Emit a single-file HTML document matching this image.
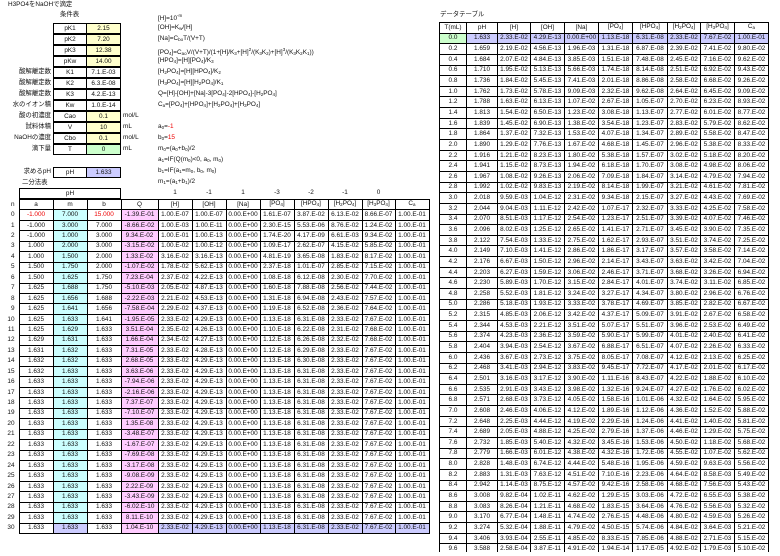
<!DOCTYPE html>
<html><head><meta charset="utf-8"><style>
*{margin:0;padding:0;box-sizing:border-box}
body{width:780px;height:556px;overflow:hidden;background:#fff;font-family:"Liberation Sans","Noto Sans CJK JP",sans-serif;font-size:6.4px;color:#111;position:relative}
.a{position:absolute;white-space:nowrap;line-height:10px}
.bx{position:absolute;border:1px solid #000;text-align:center;line-height:9px;height:11px}
sub{font-size:4.5px;vertical-align:-1px}
sup{font-size:4.5px;vertical-align:3px}
table{border-collapse:collapse;table-layout:fixed;position:absolute}
td{border:1px solid #000;text-align:center;height:10.45px;line-height:8px;padding:0;white-space:nowrap;overflow:hidden}
#L td.n{border:none;text-align:right;padding-right:4px}
#L tr td:nth-child(3){background:#ccffff}
#L tr td:nth-child(5){background:#ffccff}
#L tr.h td{background:#fff}
#L tr.z td:nth-child(2),#L tr.z td:nth-child(4){color:#e00}
#L tr.e td:nth-child(3),#L tr.e td:nth-child(n+6){background:#ccccff}
#R td{height:10.65px}
#R tr.f td{background:#ccccff}
#R tr.f td:first-child{background:#ccffcc}
.r{color:#e00}
</style></head><body>
<div class="a" style="left:8px;top:0">H3PO4をNaOHで滴定</div>
<div class="a" style="left:60px;top:10px">条件表</div>
<div class="a" style="left:440px;top:10px">データテーブル</div>

<div class="bx" style="left:53px;top:23px;width:34px">pK1</div><div class="bx" style="left:86px;top:23px;width:35px;background:#ffffcc">2.15</div>
<div class="bx" style="left:53px;top:34px;width:34px">pK2</div><div class="bx" style="left:86px;top:34px;width:35px;background:#ffffcc">7.20</div>
<div class="bx" style="left:53px;top:45px;width:34px">pK3</div><div class="bx" style="left:86px;top:45px;width:35px;background:#ffffcc">12.38</div>
<div class="bx" style="left:53px;top:56px;width:34px">pKw</div><div class="bx" style="left:86px;top:56px;width:35px;background:#ffffcc">14.00</div>
<div class="a" style="left:0;width:51px;text-align:right;top:67px">酸解離定数</div><div class="bx" style="left:53px;top:67px;width:34px">K1</div><div class="bx" style="left:86px;top:67px;width:35px">7.1.E-03</div>
<div class="a" style="left:0;width:51px;text-align:right;top:78px">酸解離定数</div><div class="bx" style="left:53px;top:78px;width:34px">K2</div><div class="bx" style="left:86px;top:78px;width:35px">6.3.E-08</div>
<div class="a" style="left:0;width:51px;text-align:right;top:89px">酸解離定数</div><div class="bx" style="left:53px;top:89px;width:34px">K3</div><div class="bx" style="left:86px;top:89px;width:35px">4.2.E-13</div>
<div class="a" style="left:0;width:51px;text-align:right;top:100px">水のイオン積</div><div class="bx" style="left:53px;top:100px;width:34px">Kw</div><div class="bx" style="left:86px;top:100px;width:35px">1.0.E-14</div>
<div class="a" style="left:0;width:51px;text-align:right;top:111px">酸の初濃度</div><div class="bx" style="left:53px;top:111px;width:34px">Cao</div><div class="bx" style="left:86px;top:111px;width:35px;background:#ffffcc">0.1</div><div class="a" style="left:123px;top:111px">mol/L</div>
<div class="a" style="left:0;width:51px;text-align:right;top:122px">試料体積</div><div class="bx" style="left:53px;top:122px;width:34px">V</div><div class="bx" style="left:86px;top:122px;width:35px;background:#ffffcc">10</div><div class="a" style="left:123px;top:122px">mL</div>
<div class="a" style="left:0;width:51px;text-align:right;top:133px">NaOHの濃度</div><div class="bx" style="left:53px;top:133px;width:34px">Cbo</div><div class="bx" style="left:86px;top:133px;width:35px;background:#ffffcc">0.1</div><div class="a" style="left:123px;top:133px">mol/L</div>
<div class="a" style="left:0;width:51px;text-align:right;top:144px">滴下量</div><div class="bx" style="left:53px;top:144px;width:34px">T</div><div class="bx" style="left:86px;top:144px;width:35px;background:#ccffcc">0</div><div class="a" style="left:123px;top:144px">mL</div>
<div class="a" style="left:0;width:51px;text-align:right;top:167px">求めるpH</div><div class="bx" style="left:53px;top:167px;width:34px">pH</div><div class="bx" style="left:86px;top:167px;width:35px;background:#ccccff">1.633</div>
<div class="a" style="left:22px;top:178px">二分法表</div>

<div class="a" style="left:158px;top:11px">[H]=10<sup>-m</sup></div>
<div class="a" style="left:158px;top:23px">[OH]=K<sub>w</sub>/[H]</div>
<div class="a" style="left:158px;top:34px">[Na]=C<sub>bo</sub>T/(V+T)</div>
<div class="a" style="left:158px;top:45px">[PO<sub>4</sub>]=C<sub>ao</sub>V/(V+T)/(1+[H]/K<sub>3</sub>+[H]<sup>2</sup>/(K<sub>3</sub>K<sub>2</sub>)+[H]<sup>3</sup>/(K<sub>3</sub>K<sub>2</sub>K<sub>1</sub>))</div>
<div class="a" style="left:158px;top:56px">[HPO<sub>4</sub>]=[H][PO<sub>4</sub>]/K<sub>3</sub></div>
<div class="a" style="left:158px;top:67px">[H<sub>2</sub>PO<sub>4</sub>]=[H][HPO<sub>4</sub>]/K<sub>2</sub></div>
<div class="a" style="left:158px;top:78px">[H<sub>3</sub>PO<sub>4</sub>]=[H][H<sub>2</sub>PO<sub>4</sub>]/K<sub>1</sub></div>
<div class="a" style="left:158px;top:89px">Q=[H]-[OH]+[Na]-3[PO<sub>4</sub>]-2[HPO<sub>4</sub>]-[H<sub>2</sub>PO<sub>4</sub>]</div>
<div class="a" style="left:158px;top:100px">C<sub>a</sub>=[PO<sub>4</sub>]+[HPO<sub>4</sub>]+[H<sub>2</sub>PO<sub>4</sub>]+[H<sub>3</sub>PO<sub>4</sub>]</div>
<div class="a" style="left:158px;top:122px">a<sub>0</sub>=<span class="r">-1</span></div>
<div class="a" style="left:158px;top:133px">b<sub>0</sub>=<span class="r">15</span></div>
<div class="a" style="left:158px;top:144px">m<sub>0</sub>=(a<sub>0</sub>+b<sub>0</sub>)/2</div>
<div class="a" style="left:158px;top:155px">a<sub>1</sub>=IF(Q(m<sub>0</sub>)&lt;0, a<sub>0</sub>, m<sub>0</sub>)</div>
<div class="a" style="left:158px;top:166px">b<sub>1</sub>=IF(a<sub>1</sub>=m<sub>0</sub>, b<sub>0</sub>, m<sub>0</sub>)</div>
<div class="a" style="left:158px;top:177px">m<sub>1</sub>=(a<sub>1</sub>+b<sub>1</sub>)/2</div>

<div class="bx" style="left:19px;top:188px;width:102px">pH</div>
<div class="a" style="left:158px;top:188px;width:34px;text-align:center">1</div>
<div class="a" style="left:192px;top:188px;width:34px;text-align:center">-1</div>
<div class="a" style="left:226px;top:188px;width:34px;text-align:center">1</div>
<div class="a" style="left:260px;top:188px;width:34px;text-align:center">-3</div>
<div class="a" style="left:294px;top:188px;width:34px;text-align:center">-2</div>
<div class="a" style="left:328px;top:188px;width:34px;text-align:center">-1</div>
<div class="a" style="left:362px;top:188px;width:33px;text-align:center">0</div>

<table id="L" style="left:0;top:199px;width:429px">
<colgroup><col style="width:19px"><col style="width:34px"><col style="width:34px"><col style="width:34px"><col style="width:37px"><col style="width:34px"><col style="width:34px"><col style="width:34px"><col style="width:34px"><col style="width:34px"><col style="width:34px"><col style="width:33px"><col style="width:34px"></colgroup>
<tr class="h"><td class="n">n</td><td>a</td><td>m</td><td>b</td><td>Q</td><td>[H]</td><td>[OH]</td><td>[Na]</td><td>[PO<sub>4</sub>]</td><td>[HPO<sub>4</sub>]</td><td>[H<sub>2</sub>PO<sub>4</sub>]</td><td>[H<sub>3</sub>PO<sub>4</sub>]</td><td>C<sub>a</sub></td></tr>
<tr class="z"><td class="n">0</td><td>-1.000</td><td>7.000</td><td>15.000</td><td>-1.39.E-01</td><td>1.00.E-07</td><td>1.00.E-07</td><td>0.00.E+00</td><td>1.61.E-07</td><td>3.87.E-02</td><td>6.13.E-02</td><td>8.66.E-07</td><td>1.00.E-01</td></tr>
<tr><td class="n">1</td><td>-1.000</td><td>3.000</td><td>7.000</td><td>-8.66.E-02</td><td>1.00.E-03</td><td>1.00.E-11</td><td>0.00.E+00</td><td>2.30.E-15</td><td>5.53.E-06</td><td>8.76.E-02</td><td>1.24.E-02</td><td>1.00.E-01</td></tr>
<tr><td class="n">2</td><td>-1.000</td><td>1.000</td><td>3.000</td><td>9.34.E-02</td><td>1.00.E-01</td><td>1.00.E-13</td><td>0.00.E+00</td><td>1.74.E-20</td><td>4.17.E-09</td><td>6.61.E-03</td><td>9.34.E-02</td><td>1.00.E-01</td></tr>
<tr><td class="n">3</td><td>1.000</td><td>2.000</td><td>3.000</td><td>-3.15.E-02</td><td>1.00.E-02</td><td>1.00.E-12</td><td>0.00.E+00</td><td>1.09.E-17</td><td>2.62.E-07</td><td>4.15.E-02</td><td>5.85.E-02</td><td>1.00.E-01</td></tr>
<tr><td class="n">4</td><td>1.000</td><td>1.500</td><td>2.000</td><td>1.33.E-02</td><td>3.16.E-02</td><td>3.16.E-13</td><td>0.00.E+00</td><td>4.81.E-19</td><td>3.65.E-08</td><td>1.83.E-02</td><td>8.17.E-02</td><td>1.00.E-01</td></tr>
<tr><td class="n">5</td><td>1.500</td><td>1.750</td><td>2.000</td><td>-1.07.E-02</td><td>1.78.E-02</td><td>5.62.E-13</td><td>0.00.E+00</td><td>2.37.E-18</td><td>1.01.E-07</td><td>2.85.E-02</td><td>7.15.E-02</td><td>1.00.E-01</td></tr>
<tr><td class="n">6</td><td>1.500</td><td>1.625</td><td>1.750</td><td>7.23.E-04</td><td>2.37.E-02</td><td>4.22.E-13</td><td>0.00.E+00</td><td>1.08.E-18</td><td>6.12.E-08</td><td>2.30.E-02</td><td>7.70.E-02</td><td>1.00.E-01</td></tr>
<tr><td class="n">7</td><td>1.625</td><td>1.688</td><td>1.750</td><td>-5.10.E-03</td><td>2.05.E-02</td><td>4.87.E-13</td><td>0.00.E+00</td><td>1.60.E-18</td><td>7.88.E-08</td><td>2.56.E-02</td><td>7.44.E-02</td><td>1.00.E-01</td></tr>
<tr><td class="n">8</td><td>1.625</td><td>1.656</td><td>1.688</td><td>-2.22.E-03</td><td>2.21.E-02</td><td>4.53.E-13</td><td>0.00.E+00</td><td>1.31.E-18</td><td>6.94.E-08</td><td>2.43.E-02</td><td>7.57.E-02</td><td>1.00.E-01</td></tr>
<tr><td class="n">9</td><td>1.625</td><td>1.641</td><td>1.656</td><td>-7.58.E-04</td><td>2.29.E-02</td><td>4.37.E-13</td><td>0.00.E+00</td><td>1.19.E-18</td><td>6.52.E-08</td><td>2.36.E-02</td><td>7.64.E-02</td><td>1.00.E-01</td></tr>
<tr><td class="n">10</td><td>1.625</td><td>1.633</td><td>1.641</td><td>-1.95.E-05</td><td>2.33.E-02</td><td>4.29.E-13</td><td>0.00.E+00</td><td>1.13.E-18</td><td>6.31.E-08</td><td>2.33.E-02</td><td>7.67.E-02</td><td>1.00.E-01</td></tr>
<tr><td class="n">11</td><td>1.625</td><td>1.629</td><td>1.633</td><td>3.51.E-04</td><td>2.35.E-02</td><td>4.26.E-13</td><td>0.00.E+00</td><td>1.10.E-18</td><td>6.22.E-08</td><td>2.31.E-02</td><td>7.68.E-02</td><td>1.00.E-01</td></tr>
<tr><td class="n">12</td><td>1.629</td><td>1.631</td><td>1.633</td><td>1.66.E-04</td><td>2.34.E-02</td><td>4.27.E-13</td><td>0.00.E+00</td><td>1.12.E-18</td><td>6.26.E-08</td><td>2.32.E-02</td><td>7.68.E-02</td><td>1.00.E-01</td></tr>
<tr><td class="n">13</td><td>1.631</td><td>1.632</td><td>1.633</td><td>7.31.E-05</td><td>2.33.E-02</td><td>4.28.E-13</td><td>0.00.E+00</td><td>1.12.E-18</td><td>6.29.E-08</td><td>2.33.E-02</td><td>7.67.E-02</td><td>1.00.E-01</td></tr>
<tr><td class="n">14</td><td>1.632</td><td>1.632</td><td>1.633</td><td>2.68.E-05</td><td>2.33.E-02</td><td>4.29.E-13</td><td>0.00.E+00</td><td>1.13.E-18</td><td>6.30.E-08</td><td>2.33.E-02</td><td>7.67.E-02</td><td>1.00.E-01</td></tr>
<tr><td class="n">15</td><td>1.632</td><td>1.633</td><td>1.633</td><td>3.63.E-06</td><td>2.33.E-02</td><td>4.29.E-13</td><td>0.00.E+00</td><td>1.13.E-18</td><td>6.31.E-08</td><td>2.33.E-02</td><td>7.67.E-02</td><td>1.00.E-01</td></tr>
<tr><td class="n">16</td><td>1.633</td><td>1.633</td><td>1.633</td><td>-7.94.E-06</td><td>2.33.E-02</td><td>4.29.E-13</td><td>0.00.E+00</td><td>1.13.E-18</td><td>6.31.E-08</td><td>2.33.E-02</td><td>7.67.E-02</td><td>1.00.E-01</td></tr>
<tr><td class="n">17</td><td>1.633</td><td>1.633</td><td>1.633</td><td>-2.16.E-06</td><td>2.33.E-02</td><td>4.29.E-13</td><td>0.00.E+00</td><td>1.13.E-18</td><td>6.31.E-08</td><td>2.33.E-02</td><td>7.67.E-02</td><td>1.00.E-01</td></tr>
<tr><td class="n">18</td><td>1.633</td><td>1.633</td><td>1.633</td><td>7.37.E-07</td><td>2.33.E-02</td><td>4.29.E-13</td><td>0.00.E+00</td><td>1.13.E-18</td><td>6.31.E-08</td><td>2.33.E-02</td><td>7.67.E-02</td><td>1.00.E-01</td></tr>
<tr><td class="n">19</td><td>1.633</td><td>1.633</td><td>1.633</td><td>-7.10.E-07</td><td>2.33.E-02</td><td>4.29.E-13</td><td>0.00.E+00</td><td>1.13.E-18</td><td>6.31.E-08</td><td>2.33.E-02</td><td>7.67.E-02</td><td>1.00.E-01</td></tr>
<tr><td class="n">20</td><td>1.633</td><td>1.633</td><td>1.633</td><td>1.35.E-08</td><td>2.33.E-02</td><td>4.29.E-13</td><td>0.00.E+00</td><td>1.13.E-18</td><td>6.31.E-08</td><td>2.33.E-02</td><td>7.67.E-02</td><td>1.00.E-01</td></tr>
<tr><td class="n">21</td><td>1.633</td><td>1.633</td><td>1.633</td><td>-3.48.E-07</td><td>2.33.E-02</td><td>4.29.E-13</td><td>0.00.E+00</td><td>1.13.E-18</td><td>6.31.E-08</td><td>2.33.E-02</td><td>7.67.E-02</td><td>1.00.E-01</td></tr>
<tr><td class="n">22</td><td>1.633</td><td>1.633</td><td>1.633</td><td>-1.67.E-07</td><td>2.33.E-02</td><td>4.29.E-13</td><td>0.00.E+00</td><td>1.13.E-18</td><td>6.31.E-08</td><td>2.33.E-02</td><td>7.67.E-02</td><td>1.00.E-01</td></tr>
<tr><td class="n">23</td><td>1.633</td><td>1.633</td><td>1.633</td><td>-7.69.E-08</td><td>2.33.E-02</td><td>4.29.E-13</td><td>0.00.E+00</td><td>1.13.E-18</td><td>6.31.E-08</td><td>2.33.E-02</td><td>7.67.E-02</td><td>1.00.E-01</td></tr>
<tr><td class="n">24</td><td>1.633</td><td>1.633</td><td>1.633</td><td>-3.17.E-08</td><td>2.33.E-02</td><td>4.29.E-13</td><td>0.00.E+00</td><td>1.13.E-18</td><td>6.31.E-08</td><td>2.33.E-02</td><td>7.67.E-02</td><td>1.00.E-01</td></tr>
<tr><td class="n">25</td><td>1.633</td><td>1.633</td><td>1.633</td><td>-9.08.E-09</td><td>2.33.E-02</td><td>4.29.E-13</td><td>0.00.E+00</td><td>1.13.E-18</td><td>6.31.E-08</td><td>2.33.E-02</td><td>7.67.E-02</td><td>1.00.E-01</td></tr>
<tr><td class="n">26</td><td>1.633</td><td>1.633</td><td>1.633</td><td>2.22.E-09</td><td>2.33.E-02</td><td>4.29.E-13</td><td>0.00.E+00</td><td>1.13.E-18</td><td>6.31.E-08</td><td>2.33.E-02</td><td>7.67.E-02</td><td>1.00.E-01</td></tr>
<tr><td class="n">27</td><td>1.633</td><td>1.633</td><td>1.633</td><td>-3.43.E-09</td><td>2.33.E-02</td><td>4.29.E-13</td><td>0.00.E+00</td><td>1.13.E-18</td><td>6.31.E-08</td><td>2.33.E-02</td><td>7.67.E-02</td><td>1.00.E-01</td></tr>
<tr><td class="n">28</td><td>1.633</td><td>1.633</td><td>1.633</td><td>-6.02.E-10</td><td>2.33.E-02</td><td>4.29.E-13</td><td>0.00.E+00</td><td>1.13.E-18</td><td>6.31.E-08</td><td>2.33.E-02</td><td>7.67.E-02</td><td>1.00.E-01</td></tr>
<tr><td class="n">29</td><td>1.633</td><td>1.633</td><td>1.633</td><td>8.11.E-10</td><td>2.33.E-02</td><td>4.29.E-13</td><td>0.00.E+00</td><td>1.13.E-18</td><td>6.31.E-08</td><td>2.33.E-02</td><td>7.67.E-02</td><td>1.00.E-01</td></tr>
<tr class="e"><td class="n">30</td><td>1.633</td><td>1.633</td><td>1.633</td><td>1.04.E-10</td><td>2.33.E-02</td><td>4.29.E-13</td><td>0.00.E+00</td><td>1.13.E-18</td><td>6.31.E-08</td><td>2.33.E-02</td><td>7.67.E-02</td><td>1.00.E-01</td></tr>
</table>

<div style="position:absolute;left:0;top:0;width:780px;height:552px;overflow:hidden">
<table id="R" style="left:439px;top:22px;width:329px">
<colgroup><col style="width:27px"><col style="width:31px"><col style="width:33px"><col style="width:34px"><col style="width:34px"><col style="width:34px"><col style="width:35px"><col style="width:33px"><col style="width:34px"><col style="width:34px"></colgroup>
<tr><td>T(mL)</td><td>pH</td><td>[H]</td><td>[OH]</td><td>[Na]</td><td>[PO<sub>4</sub>]</td><td>[HPO<sub>4</sub>]</td><td>[H<sub>2</sub>PO<sub>4</sub>]</td><td>[H<sub>3</sub>PO<sub>4</sub>]</td><td>C<sub>a</sub></td></tr>
<tr class="f"><td>0.0</td><td>1.633</td><td>2.33.E-02</td><td>4.29.E-13</td><td>0.00.E+00</td><td>1.13.E-18</td><td>6.31.E-08</td><td>2.33.E-02</td><td>7.67.E-02</td><td>1.00.E-01</td></tr>
<tr><td>0.2</td><td>1.659</td><td>2.19.E-02</td><td>4.56.E-13</td><td>1.96.E-03</td><td>1.31.E-18</td><td>6.87.E-08</td><td>2.39.E-02</td><td>7.41.E-02</td><td>9.80.E-02</td></tr>
<tr><td>0.4</td><td>1.684</td><td>2.07.E-02</td><td>4.84.E-13</td><td>3.85.E-03</td><td>1.51.E-18</td><td>7.48.E-08</td><td>2.45.E-02</td><td>7.16.E-02</td><td>9.62.E-02</td></tr>
<tr><td>0.6</td><td>1.710</td><td>1.95.E-02</td><td>5.13.E-13</td><td>5.66.E-03</td><td>1.74.E-18</td><td>8.14.E-08</td><td>2.51.E-02</td><td>6.92.E-02</td><td>9.43.E-02</td></tr>
<tr><td>0.8</td><td>1.736</td><td>1.84.E-02</td><td>5.45.E-13</td><td>7.41.E-03</td><td>2.01.E-18</td><td>8.86.E-08</td><td>2.58.E-02</td><td>6.68.E-02</td><td>9.26.E-02</td></tr>
<tr><td>1.0</td><td>1.762</td><td>1.73.E-02</td><td>5.78.E-13</td><td>9.09.E-03</td><td>2.32.E-18</td><td>9.62.E-08</td><td>2.64.E-02</td><td>6.45.E-02</td><td>9.09.E-02</td></tr>
<tr><td>1.2</td><td>1.788</td><td>1.63.E-02</td><td>6.13.E-13</td><td>1.07.E-02</td><td>2.67.E-18</td><td>1.05.E-07</td><td>2.70.E-02</td><td>6.23.E-02</td><td>8.93.E-02</td></tr>
<tr><td>1.4</td><td>1.813</td><td>1.54.E-02</td><td>6.50.E-13</td><td>1.23.E-02</td><td>3.08.E-18</td><td>1.13.E-07</td><td>2.77.E-02</td><td>6.01.E-02</td><td>8.77.E-02</td></tr>
<tr><td>1.6</td><td>1.839</td><td>1.45.E-02</td><td>6.90.E-13</td><td>1.38.E-02</td><td>3.54.E-18</td><td>1.23.E-07</td><td>2.83.E-02</td><td>5.79.E-02</td><td>8.62.E-02</td></tr>
<tr><td>1.8</td><td>1.864</td><td>1.37.E-02</td><td>7.32.E-13</td><td>1.53.E-02</td><td>4.07.E-18</td><td>1.34.E-07</td><td>2.89.E-02</td><td>5.58.E-02</td><td>8.47.E-02</td></tr>
<tr><td>2.0</td><td>1.890</td><td>1.29.E-02</td><td>7.76.E-13</td><td>1.67.E-02</td><td>4.68.E-18</td><td>1.45.E-07</td><td>2.96.E-02</td><td>5.38.E-02</td><td>8.33.E-02</td></tr>
<tr><td>2.2</td><td>1.916</td><td>1.21.E-02</td><td>8.23.E-13</td><td>1.80.E-02</td><td>5.38.E-18</td><td>1.57.E-07</td><td>3.02.E-02</td><td>5.18.E-02</td><td>8.20.E-02</td></tr>
<tr><td>2.4</td><td>1.941</td><td>1.15.E-02</td><td>8.73.E-13</td><td>1.94.E-02</td><td>6.18.E-18</td><td>1.70.E-07</td><td>3.08.E-02</td><td>4.98.E-02</td><td>8.06.E-02</td></tr>
<tr><td>2.6</td><td>1.967</td><td>1.08.E-02</td><td>9.26.E-13</td><td>2.06.E-02</td><td>7.09.E-18</td><td>1.84.E-07</td><td>3.14.E-02</td><td>4.79.E-02</td><td>7.94.E-02</td></tr>
<tr><td>2.8</td><td>1.992</td><td>1.02.E-02</td><td>9.83.E-13</td><td>2.19.E-02</td><td>8.14.E-18</td><td>1.99.E-07</td><td>3.21.E-02</td><td>4.61.E-02</td><td>7.81.E-02</td></tr>
<tr><td>3.0</td><td>2.018</td><td>9.59.E-03</td><td>1.04.E-12</td><td>2.31.E-02</td><td>9.34.E-18</td><td>2.15.E-07</td><td>3.27.E-02</td><td>4.43.E-02</td><td>7.69.E-02</td></tr>
<tr><td>3.2</td><td>2.044</td><td>9.04.E-03</td><td>1.11.E-12</td><td>2.42.E-02</td><td>1.07.E-17</td><td>2.32.E-07</td><td>3.33.E-02</td><td>4.25.E-02</td><td>7.58.E-02</td></tr>
<tr><td>3.4</td><td>2.070</td><td>8.51.E-03</td><td>1.17.E-12</td><td>2.54.E-02</td><td>1.23.E-17</td><td>2.51.E-07</td><td>3.39.E-02</td><td>4.07.E-02</td><td>7.46.E-02</td></tr>
<tr><td>3.6</td><td>2.096</td><td>8.02.E-03</td><td>1.25.E-12</td><td>2.65.E-02</td><td>1.41.E-17</td><td>2.71.E-07</td><td>3.45.E-02</td><td>3.90.E-02</td><td>7.35.E-02</td></tr>
<tr><td>3.8</td><td>2.122</td><td>7.54.E-03</td><td>1.33.E-12</td><td>2.75.E-02</td><td>1.62.E-17</td><td>2.93.E-07</td><td>3.51.E-02</td><td>3.74.E-02</td><td>7.25.E-02</td></tr>
<tr><td>4.0</td><td>2.149</td><td>7.10.E-03</td><td>1.41.E-12</td><td>2.86.E-02</td><td>1.86.E-17</td><td>3.17.E-07</td><td>3.57.E-02</td><td>3.58.E-02</td><td>7.14.E-02</td></tr>
<tr><td>4.2</td><td>2.176</td><td>6.67.E-03</td><td>1.50.E-12</td><td>2.96.E-02</td><td>2.14.E-17</td><td>3.43.E-07</td><td>3.63.E-02</td><td>3.42.E-02</td><td>7.04.E-02</td></tr>
<tr><td>4.4</td><td>2.203</td><td>6.27.E-03</td><td>1.59.E-12</td><td>3.06.E-02</td><td>2.46.E-17</td><td>3.71.E-07</td><td>3.68.E-02</td><td>3.26.E-02</td><td>6.94.E-02</td></tr>
<tr><td>4.6</td><td>2.230</td><td>5.89.E-03</td><td>1.70.E-12</td><td>3.15.E-02</td><td>2.84.E-17</td><td>4.01.E-07</td><td>3.74.E-02</td><td>3.11.E-02</td><td>6.85.E-02</td></tr>
<tr><td>4.8</td><td>2.258</td><td>5.52.E-03</td><td>1.81.E-12</td><td>3.24.E-02</td><td>3.27.E-17</td><td>4.34.E-07</td><td>3.80.E-02</td><td>2.96.E-02</td><td>6.76.E-02</td></tr>
<tr><td>5.0</td><td>2.286</td><td>5.18.E-03</td><td>1.93.E-12</td><td>3.33.E-02</td><td>3.78.E-17</td><td>4.69.E-07</td><td>3.85.E-02</td><td>2.82.E-02</td><td>6.67.E-02</td></tr>
<tr><td>5.2</td><td>2.315</td><td>4.85.E-03</td><td>2.06.E-12</td><td>3.42.E-02</td><td>4.37.E-17</td><td>5.09.E-07</td><td>3.91.E-02</td><td>2.67.E-02</td><td>6.58.E-02</td></tr>
<tr><td>5.4</td><td>2.344</td><td>4.53.E-03</td><td>2.21.E-12</td><td>3.51.E-02</td><td>5.07.E-17</td><td>5.51.E-07</td><td>3.96.E-02</td><td>2.53.E-02</td><td>6.49.E-02</td></tr>
<tr><td>5.6</td><td>2.374</td><td>4.23.E-03</td><td>2.36.E-12</td><td>3.59.E-02</td><td>5.90.E-17</td><td>5.99.E-07</td><td>4.01.E-02</td><td>2.40.E-02</td><td>6.41.E-02</td></tr>
<tr><td>5.8</td><td>2.404</td><td>3.94.E-03</td><td>2.54.E-12</td><td>3.67.E-02</td><td>6.88.E-17</td><td>6.51.E-07</td><td>4.07.E-02</td><td>2.26.E-02</td><td>6.33.E-02</td></tr>
<tr><td>6.0</td><td>2.436</td><td>3.67.E-03</td><td>2.73.E-12</td><td>3.75.E-02</td><td>8.05.E-17</td><td>7.08.E-07</td><td>4.12.E-02</td><td>2.13.E-02</td><td>6.25.E-02</td></tr>
<tr><td>6.2</td><td>2.468</td><td>3.41.E-03</td><td>2.94.E-12</td><td>3.83.E-02</td><td>9.45.E-17</td><td>7.72.E-07</td><td>4.17.E-02</td><td>2.01.E-02</td><td>6.17.E-02</td></tr>
<tr><td>6.4</td><td>2.501</td><td>3.16.E-03</td><td>3.17.E-12</td><td>3.90.E-02</td><td>1.11.E-16</td><td>8.43.E-07</td><td>4.22.E-02</td><td>1.88.E-02</td><td>6.10.E-02</td></tr>
<tr><td>6.6</td><td>2.535</td><td>2.91.E-03</td><td>3.43.E-12</td><td>3.98.E-02</td><td>1.32.E-16</td><td>9.24.E-07</td><td>4.27.E-02</td><td>1.76.E-02</td><td>6.02.E-02</td></tr>
<tr><td>6.8</td><td>2.571</td><td>2.68.E-03</td><td>3.73.E-12</td><td>4.05.E-02</td><td>1.58.E-16</td><td>1.01.E-06</td><td>4.32.E-02</td><td>1.64.E-02</td><td>5.95.E-02</td></tr>
<tr><td>7.0</td><td>2.608</td><td>2.46.E-03</td><td>4.06.E-12</td><td>4.12.E-02</td><td>1.89.E-16</td><td>1.12.E-06</td><td>4.36.E-02</td><td>1.52.E-02</td><td>5.88.E-02</td></tr>
<tr><td>7.2</td><td>2.648</td><td>2.25.E-03</td><td>4.44.E-12</td><td>4.19.E-02</td><td>2.29.E-16</td><td>1.24.E-06</td><td>4.41.E-02</td><td>1.40.E-02</td><td>5.81.E-02</td></tr>
<tr><td>7.4</td><td>2.689</td><td>2.05.E-03</td><td>4.88.E-12</td><td>4.25.E-02</td><td>2.79.E-16</td><td>1.37.E-06</td><td>4.46.E-02</td><td>1.29.E-02</td><td>5.75.E-02</td></tr>
<tr><td>7.6</td><td>2.732</td><td>1.85.E-03</td><td>5.40.E-12</td><td>4.32.E-02</td><td>3.45.E-16</td><td>1.53.E-06</td><td>4.50.E-02</td><td>1.18.E-02</td><td>5.68.E-02</td></tr>
<tr><td>7.8</td><td>2.779</td><td>1.66.E-03</td><td>6.01.E-12</td><td>4.38.E-02</td><td>4.32.E-16</td><td>1.72.E-06</td><td>4.55.E-02</td><td>1.07.E-02</td><td>5.62.E-02</td></tr>
<tr><td>8.0</td><td>2.828</td><td>1.48.E-03</td><td>6.74.E-12</td><td>4.44.E-02</td><td>5.48.E-16</td><td>1.95.E-06</td><td>4.59.E-02</td><td>9.63.E-03</td><td>5.56.E-02</td></tr>
<tr><td>8.2</td><td>2.883</td><td>1.31.E-03</td><td>7.63.E-12</td><td>4.51.E-02</td><td>7.10.E-16</td><td>2.23.E-06</td><td>4.64.E-02</td><td>8.58.E-03</td><td>5.49.E-02</td></tr>
<tr><td>8.4</td><td>2.942</td><td>1.14.E-03</td><td>8.75.E-12</td><td>4.57.E-02</td><td>9.42.E-16</td><td>2.58.E-06</td><td>4.68.E-02</td><td>7.56.E-03</td><td>5.43.E-02</td></tr>
<tr><td>8.6</td><td>3.008</td><td>9.82.E-04</td><td>1.02.E-11</td><td>4.62.E-02</td><td>1.29.E-15</td><td>3.03.E-06</td><td>4.72.E-02</td><td>6.55.E-03</td><td>5.38.E-02</td></tr>
<tr><td>8.8</td><td>3.083</td><td>8.26.E-04</td><td>1.21.E-11</td><td>4.68.E-02</td><td>1.83.E-15</td><td>3.64.E-06</td><td>4.76.E-02</td><td>5.56.E-03</td><td>5.32.E-02</td></tr>
<tr><td>9.0</td><td>3.170</td><td>6.77.E-04</td><td>1.48.E-11</td><td>4.74.E-02</td><td>2.76.E-15</td><td>4.48.E-06</td><td>4.80.E-02</td><td>4.59.E-03</td><td>5.26.E-02</td></tr>
<tr><td>9.2</td><td>3.274</td><td>5.32.E-04</td><td>1.88.E-11</td><td>4.79.E-02</td><td>4.50.E-15</td><td>5.74.E-06</td><td>4.84.E-02</td><td>3.64.E-03</td><td>5.21.E-02</td></tr>
<tr><td>9.4</td><td>3.406</td><td>3.93.E-04</td><td>2.55.E-11</td><td>4.85.E-02</td><td>8.33.E-15</td><td>7.85.E-06</td><td>4.88.E-02</td><td>2.71.E-03</td><td>5.15.E-02</td></tr>
<tr><td>9.6</td><td>3.588</td><td>2.58.E-04</td><td>3.87.E-11</td><td>4.91.E-02</td><td>1.94.E-14</td><td>1.17.E-05</td><td>4.92.E-02</td><td>1.79.E-03</td><td>5.10.E-02</td></tr>
</table>
</div>
</body></html>
